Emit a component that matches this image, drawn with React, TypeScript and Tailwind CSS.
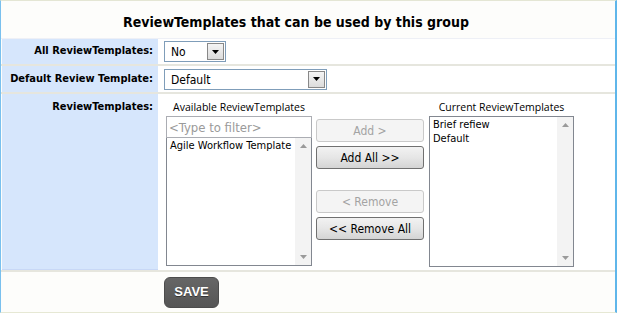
import { useState } from "react"

const TAHOMA = "font-['DejaVu_Sans_Condensed','DejaVu_Sans',sans-serif]"
const SEGOE = "font-['Open_Sans','Noto_Sans',sans-serif]"

function ArrowDown({ className = "" }: { className?: string }) {
  return (
    <svg width="7" height="4" viewBox="0 0 7 4" className={className}>
      <path d="M0 0h7L3.5 4z" fill="currentColor" />
    </svg>
  )
}

function DropSelect({ value, width }: { value: string; width: string }) {
  return (
    <div className={`${width} h-[21px] flex items-stretch border border-[#7f9db9] bg-white p-px`}>
      <span className={`${TAHOMA} flex-1 pl-[5px] text-[12px] leading-[19px] text-black`}>{value}</span>
      <span className="w-[17px] flex items-center justify-center border border-[#888] bg-gradient-to-b from-[#f4f4f4] to-[#dcdcdc] text-black">
        <ArrowDown />
      </span>
    </div>
  )
}

function ScrollTrack() {
  return (
    <div className="w-[16px] flex flex-col justify-between items-center bg-[#f3f3f3] py-[6px] text-[#9a9a9a]">
      <ArrowDown className="rotate-180" />
      <ArrowDown />
    </div>
  )
}

function ListBox({ items, className = "" }: { items: string[]; className?: string }) {
  return (
    <div className={`flex border border-[#828790] bg-white ${className}`}>
      <div className={`${TAHOMA} flex-1 pl-[3px] pt-px text-[11px] leading-[14px] text-black whitespace-nowrap overflow-hidden`}>
        {items.map(i => <div key={i}>{i}</div>)}
      </div>
      <ScrollTrack />
    </div>
  )
}

function MoveButton({ label, disabled }: { label: string; disabled?: boolean }) {
  return (
    <button
      disabled={disabled}
      className={`${TAHOMA} h-[23px] w-full rounded-[3px] border text-[12px] ${
        disabled
          ? "border-[#c9c9c9] bg-[#f4f4f4] text-[#a3a3a3]"
          : "border-[#707070] bg-gradient-to-b from-[#f2f2f2] via-[#e6e6e6] to-[#d4d4d4] text-black"
      }`}
    >
      {label}
    </button>
  )
}

export default function App() {
  const [filter, setFilter] = useState("")
  const label = `${TAHOMA} font-bold text-[11px] text-black text-right pr-[5px] bg-[#d6e6fc]`

  return (
    <div className="w-[617px] h-[313px] bg-[#fdfdfb] border-l border-l-[#79c0ee] border-r-2 border-r-[#5fb6ea] border-t border-t-[#e4e6d4] border-b border-b-[#e6e8d4] flex flex-col">
      <div className={`${TAHOMA} h-[37px] flex items-end justify-center pb-[5px] pr-[24px] text-[14px] font-bold text-black`}>
        ReviewTemplates that can be used by this group
      </div>

      <div className="h-[28px] flex border-t border-t-[#eef0f6] border-b-2 border-b-[#e6e6de]">
        <div className={`w-[156px] ml-px flex items-center justify-end ${label}`}>All ReviewTemplates:</div>
        <div className="flex-1 flex items-center pl-[6px] bg-white">
          <DropSelect value="No" width="w-[62px]" />
        </div>
      </div>

      <div className="h-[28px] flex border-b-2 border-b-[#e6e6de]">
        <div className={`w-[156px] ml-px flex items-center justify-end ${label}`}>Default Review Template:</div>
        <div className="flex-1 flex items-center pl-[6px] bg-white">
          <DropSelect value="Default" width="w-[163px]" />
        </div>
      </div>

      <div className="h-[178px] flex border-b-2 border-b-[#e6e6de]">
        <div className={`w-[156px] ml-px pt-[5px] border-b border-b-[#c8d8f6] ${label}`}>ReviewTemplates:</div>
        <div className="flex-1 flex pl-[8px] pt-[5px] bg-white">
          <div className="w-[146px] flex flex-col">
            <div className={`${SEGOE} h-[17px] text-center text-[10.5px] leading-[17px] text-black`}>Available ReviewTemplates</div>
            <input
              value={filter}
              onChange={e => setFilter(e.target.value)}
              placeholder="<Type to filter>"
              className={`${TAHOMA} h-[22px] border border-[#abadb3] px-[2px] text-[13px] text-black placeholder:text-[#9a9a9a] outline-none`}
            />
            <ListBox items={["Agile Workflow Template"]} className="h-[128px] border-t-0" />
          </div>

          <div className="w-[108px] ml-[4px] pt-[20px] flex flex-col">
            <MoveButton label="Add >" disabled />
            <div className="h-[4px]" />
            <MoveButton label="Add All >>" />
            <div className="h-[21px]" />
            <MoveButton label="< Remove" disabled />
            <div className="h-[4px]" />
            <MoveButton label="<< Remove All" />
          </div>

          <div className="w-[145px] ml-[5px] flex flex-col">
            <div className={`${SEGOE} h-[17px] text-center text-[10.5px] leading-[17px] text-black`}>Current ReviewTemplates</div>
            <ListBox items={["Brief refiew", "Default"]} className="h-[151px]" />
          </div>
        </div>
      </div>

      <div className="flex-1 flex items-center pl-[163px]">
        <button className="w-[55px] h-[31px] rounded-[6px] border border-[#4c4c4c] bg-gradient-to-b from-[#666] to-[#555] text-[13px] font-bold text-white font-['Liberation_Sans',sans-serif] [text-shadow:0_1px_0_#333]">
          SAVE
        </button>
      </div>
    </div>
  )
}
